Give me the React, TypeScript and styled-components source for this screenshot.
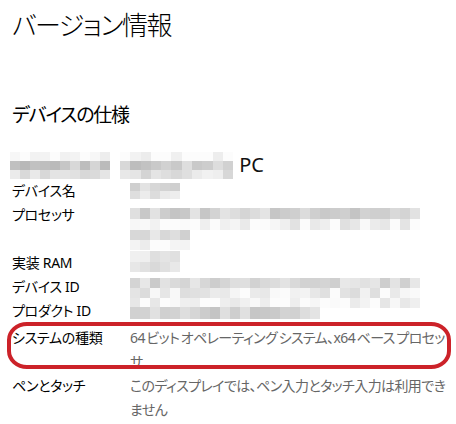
import * as React from 'react';
import styled, { createGlobalStyle } from 'styled-components';

const GlobalStyle = createGlobalStyle`
  html, body {
    margin: 0;
    padding: 0;
    background: #ffffff;
  }
  body {
    font-family: 'Noto Sans', 'Noto Sans CJK JP', sans-serif;
    font-feature-settings: 'palt';
    color: #000000;
  }
`;

const Page = styled.div`
  width: 456px;
  height: 424px;
  box-sizing: border-box;
  padding: 8px 3px 0 12px;
  overflow: hidden;
`;

const Title = styled.h1`
  margin: 0;
  font-size: 26px;
  font-weight: 300;
  line-height: 34px;
  letter-spacing: -1.5px;
  color: #000000;
`;

const Heading = styled.h2`
  margin: 59px 0 0;
  font-size: 19px;
  font-weight: 400;
  line-height: 28px;
  letter-spacing: -1.2px;
`;

const DeviceLine = styled.div`
  margin-top: 22px;
  height: 28px;
  display: flex;
  align-items: center;
  margin-left: -2px;
`;

const PcName = styled.span`
  font-size: 20px;
  line-height: 28px;
  margin-left: 6px;
  color: #111111;
`;

const Specs = styled.div`
  display: flex;
  flex-direction: column;
`;

const Row = styled.div<{ $lines?: number; $marked?: boolean }>`
  position: relative;
  display: grid;
  grid-template-columns: 118px 1fr;
  height: ${(p) => (p.$lines ?? 1) * 24}px;
  margin-top: ${(p) => (p.$marked ? '3px' : '0')};
  font-size: 14px;
  line-height: 24px;
`;

const Label = styled.div`
  color: #000000;
  letter-spacing: -0.3px;
`;

const Value = styled.div`
  color: #666666;
  letter-spacing: -0.6px;
  word-spacing: -1.5px;
  display: flex;
  flex-direction: column;
  align-items: flex-start;
`;

const Mark = styled.div`
  position: absolute;
  left: -5px;
  right: 2px;
  top: -4px;
  bottom: 5px;
  border: 4px solid #cc2229;
  border-radius: 20px / 18px;
  pointer-events: none;
`;

const MosaicGrid = styled.div<{ $cols: number; $w: number; $h: number; $shift: number }>`
  display: grid;
  flex-shrink: 0;
  grid-template-columns: repeat(${(p) => p.$cols}, ${(p) => p.$w}px);
  grid-auto-rows: ${(p) => p.$h}px;
  margin-top: ${(p) => p.$shift}px;
`;

const Cell = styled.div``;

function hash(n: number) {
  const x = Math.sin(n * 12.9898) * 43758.5453;
  return x - Math.floor(x);
}

type MosaicProps = {
  cols: number;
  rows: number[];
  w?: number;
  h: number;
  seed: number;
  shift?: number;
};

// rows: base lightness per row (0..255); cells vary around it
const Mosaic: React.FC<MosaicProps> = ({ cols, rows, w = 10, h, seed, shift = 0 }) => {
  const cells: React.ReactNode[] = [];
  rows.forEach((base, r) => {
    for (let c = 0; c < cols; c++) {
      const v = Math.round(Math.min(252, base + (hash(seed + r * 97 + c * 13) - 0.5) * 34));
      cells.push(<Cell key={`${r}-${c}`} style={{ background: `rgb(${v},${v},${v})` }} />);
    }
  });
  return (
    <MosaicGrid $cols={cols} $w={w} $h={h} $shift={shift}>
      {cells}
    </MosaicGrid>
  );
};

const Gap = styled.div`
  width: 10px;
`;

export default function App() {
  return (
    <>
      <GlobalStyle />
      <Page>
        <Title>バージョン情報</Title>
        <Heading>デバイスの仕様</Heading>
        <DeviceLine>
          <Mosaic cols={10} rows={[245, 200, 225]} h={9} seed={3} />
          <Gap />
          <Mosaic cols={11} rows={[245, 205, 228]} w={10.3} h={9} seed={41} />
          <PcName>PC</PcName>
        </DeviceLine>
        <Specs>
          <Row>
            <Label>デバイス名</Label>
            <Value>
              <Mosaic cols={5} rows={[218, 222]} h={8} seed={7} shift={4} />
            </Value>
          </Row>
          <Row $lines={2}>
            <Label>プロセッサ</Label>
            <Value>
              <Mosaic cols={29} rows={[212, 240]} h={11} seed={11} shift={5} />
              <Mosaic cols={6} rows={[222, 244]} h={10} seed={19} />
            </Value>
          </Row>
          <Row>
            <Label>実装 RAM</Label>
            <Value>
              <Mosaic cols={5} rows={[232, 216]} h={10.5} seed={31} />
            </Value>
          </Row>
          <Row>
            <Label>デバイス ID</Label>
            <Value>
              <Mosaic cols={29} rows={[215, 236, 244]} h={10} seed={23} shift={3} />
            </Value>
          </Row>
          <Row>
            <Label>プロダクト ID</Label>
            <Value>
              <Mosaic cols={19} rows={[212]} h={12} seed={29} shift={8} />
            </Value>
          </Row>
          <Row $lines={2} $marked>
            <Label>システムの種類</Label>
            <Value>64 ビット オペレーティング システム、x64 ベース プロセッサ</Value>
            <Mark />
          </Row>
          <Row $lines={2}>
            <Label>ペンとタッチ</Label>
            <Value>このディスプレイでは、ペン入力とタッチ入力は利用できません</Value>
          </Row>
        </Specs>
      </Page>
    </>
  );
}
